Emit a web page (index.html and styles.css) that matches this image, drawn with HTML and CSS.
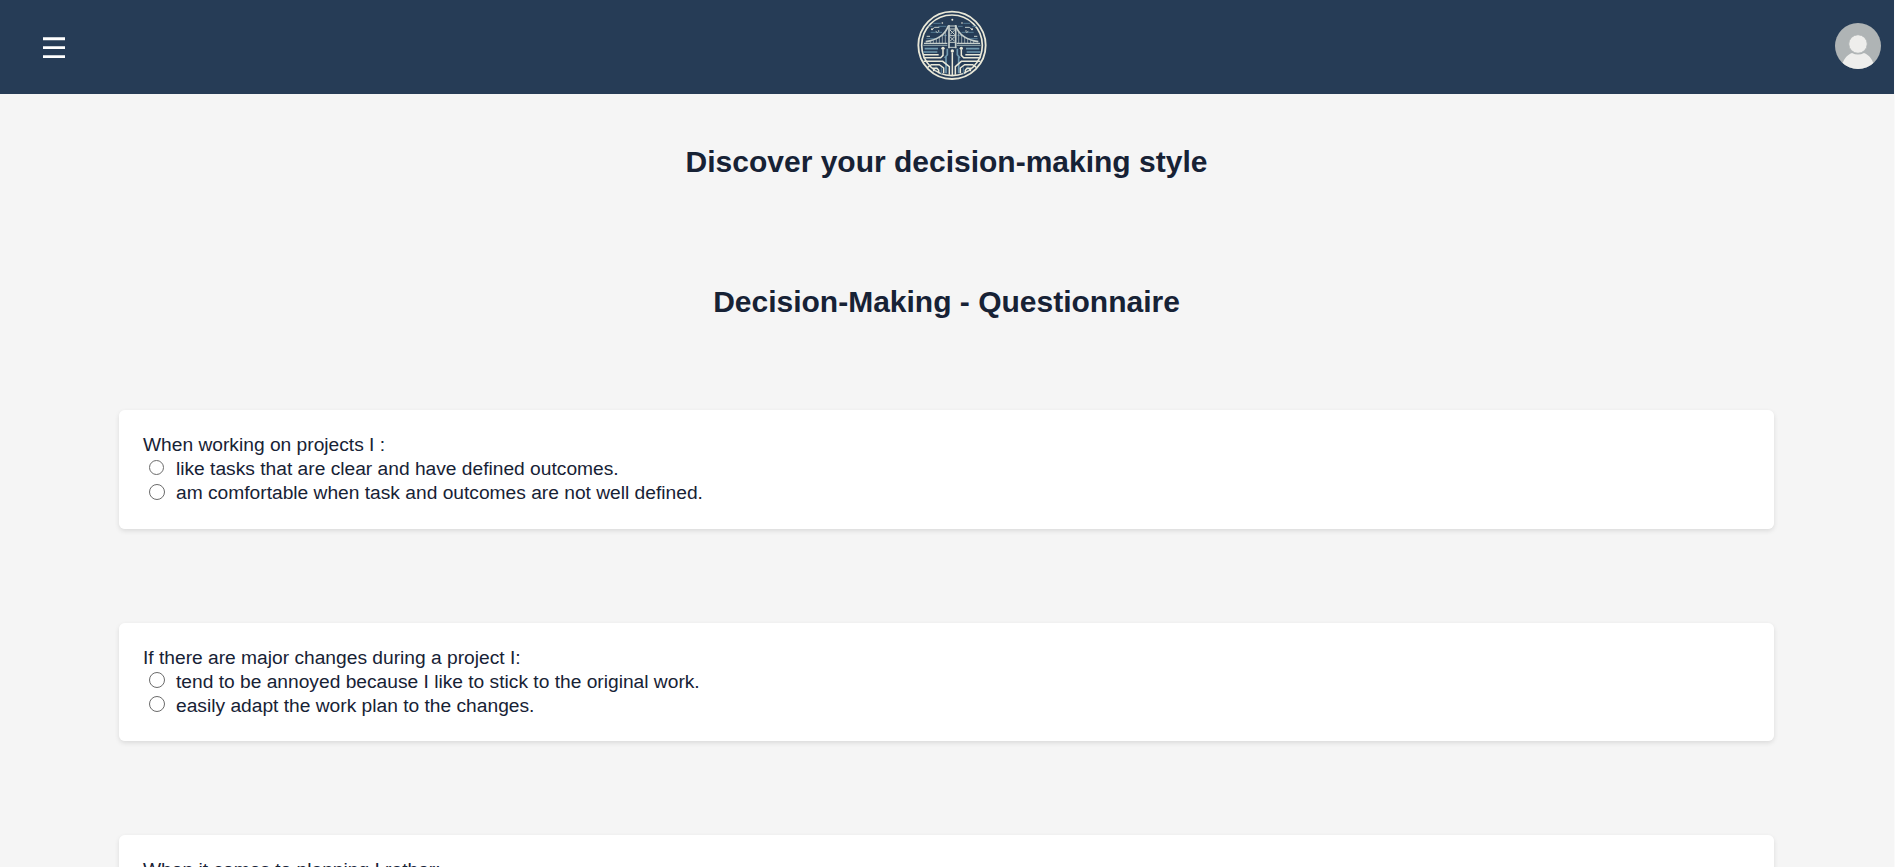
FILE: index.html
```html
<!DOCTYPE html>
<html lang="en">
<head>
<meta charset="utf-8">
<title>Decision-Making Questionnaire</title>
<link rel="stylesheet" href="styles.css">
</head>
<body>
<div class="page">
<header class="header">
  <button class="menu" aria-label="Menu"><svg width="22" height="22" viewBox="0 0 22 22"><path fill="#fff" d="M0 .3h22v3H0zM0 9.3h22V12H0zM0 18.3h22V21H0z"/></svg></button>
  <svg class="logo" width="84" height="84" viewBox="0 0 252 252" fill="none" stroke="#e9e8d8" stroke-width="3">
    <circle cx="126" cy="124" r="101" stroke-width="5.500"/>
    <circle cx="126" cy="124" r="91" stroke-width="5"/>
    <g stroke="#557b94" stroke-width="3">
      <path d="M70 58h22M160 58h20M56 67h12M187 67h12M85 67h24M144 67h14M62 85h34M155 85h36M49 104h28M176 104h27M96 94h15M142 94h15"/>
      <path stroke="#6f98ae" d="M44 134h40M168 134h40M40 144h42M170 144h42M112 134v18l-8 10M142 134v18l8 10M108 156v52M146 156v52" stroke-width="5"/>
      <path d="M78 187v12M174 187v12M94 190v20M160 190v20"/>
    </g>
    <g stroke-width="3" stroke="#c5cecb">
      <path d="M68 75l6-5h14M184 75l-6-5h-13M77 82l6 4M175 82l-6 4M50 97h10M192 97h10"/>
      <path d="M47 113Q102 104 115 65M205 113Q150 104 137 65" stroke-width="5"/>
      <path d="M61 112v5M70 109v8M79 105v12M88 99v18M97 91v26M106 80v37M191 112v5M182 109v8M173 105v12M164 99v18M155 91v26M146 80v37" stroke-width="2"/>
      <path d="M42 118h70M140 118h70" stroke-width="4"/>
      <path d="M40 124h72M140 124h72" stroke="#8398a0" stroke-width="4"/>
      <path d="M117 63v70M137 63v70" stroke-width="5"/>
      <path d="M115 66h24M118 75h18M118 95h18M118 115h18M120 78l14 14M134 78l-14 14M120 98l14 14M134 98l-14 14M115 130h24"/>
    </g>
    <path d="M127 146v68M99 138v16l-7 7H40M154 138v16l7 7h51M40 152h46M166 152h46M41 172h57l20 16v24M211 172h-57l-18 16v24M53 190l11-8h24l13 10v16M199 190l-11-8h-24l-13 10v16M71 202v-9h10l5 6v9M181 202v-9h-10l-5 6v9" stroke-width="4.500"/>
    <g fill="#e9e8d8" stroke="none"><circle cx="127" cy="141" r="5"/><circle cx="99" cy="133" r="5"/><circle cx="154" cy="133" r="5"/><circle cx="127" cy="47" r="3"/><circle cx="97" cy="57" r="2.500"/><circle cx="156" cy="57" r="2.500"/><circle cx="66" cy="76" r="3"/><circle cx="186" cy="76" r="3"/><circle cx="86" cy="81" r="2"/><circle cx="168" cy="81" r="2"/></g>
  </svg>
  <svg class="avatar" width="46" height="46" viewBox="0 0 46 46"><defs><clipPath id="disc"><circle cx="23" cy="23" r="23"/></clipPath></defs><g clip-path="url(#disc)"><path fill="#afb4b5" d="M0 0h46v46H0z"/><path fill="#eeeeec" d="M6 46C8 36 12 32 17 30Q23 33 29 30C34 32 38 36 40 46z"/><circle cx="23" cy="21" r="9.300" fill="#eeeeec" stroke="#afb4b5" stroke-width="1"/></g></svg>
</header>
<main class="content">
  <h1 class="title">Discover your decision-making style</h1>
  <h2 class="title subtitle">Decision-Making - Questionnaire</h2>
  <form class="questions">
    <fieldset class="card first">
      <p class="question">When working on projects I :</p>
      <label class="option"><input class="radio small" type="radio" name="q1">like tasks that are clear and have defined outcomes.</label>
      <label class="option"><input class="radio" type="radio" name="q1">am comfortable when task and outcomes are not well defined.</label>
    </fieldset>
    <fieldset class="card">
      <p class="question">If there are major changes during a project I:</p>
      <label class="option"><input class="radio raised" type="radio" name="q2">tend to be annoyed because I like to stick to the original work.</label>
      <label class="option"><input class="radio raised" type="radio" name="q2">easily adapt the work plan to the changes.</label>
    </fieldset>
    <fieldset class="card">
      <p class="question">When it comes to planning I rather:</p>
    </fieldset>
  </form>
</main>
</div>
</body>
</html>
```
FILE: styles.css
```css
* { box-sizing: border-box; }
html { background: #fafafa; }
body { margin: 0; height: 867px; overflow: hidden; font-family: "Liberation Sans", Arial, sans-serif; color: #172235; }
.page { width: 1894px; height: 867px; overflow: hidden; background: #f5f5f5; }
.header { height: 94px; padding: 0 13px 0 43px; display: grid; grid-template-columns: 1fr 84px 1fr; align-items: center; background: #263c56; }
.menu { width: 22px; height: 22px; margin: 2px 0 0; padding: 0; border: 0; background: none; display: block; }
.menu svg { display: block; }
.logo { display: block; justify-self: center; margin-top: -2px; margin-left: -20px; }
.avatar { justify-self: end; margin-top: -2px; }
.content { padding: 50px 120px 0 119px; }
.title { margin: 0; font-size: 30px; line-height: 36px; font-weight: 700; text-align: center; }
.subtitle { margin-top: 104px; }
.questions { margin-top: 90px; display: flex; flex-direction: column; gap: 94px; }
.card { margin: 0; min-width: 0; height: 118px; padding: 23px 24px; border: 0; border-radius: 6px; background: #fff; box-shadow: 0 2px 5px rgba(0, 0, 0, .11); font-size: 19.2px; line-height: 24px; flex: none; }
.first { height: 119px; }
.question { margin: 0; }
.option { height: 24px; display: flex; align-items: flex-start; }
.radio { appearance: none; width: 16px; height: 16px; margin: 3px 11px 0 6px; border: 1.2px solid #6b6b6b; border-radius: 50%; background: #fff; flex: none; }
.small { width: 15px; height: 15px; margin-right: 12px; }
.raised { margin-top: 2px; }
```
